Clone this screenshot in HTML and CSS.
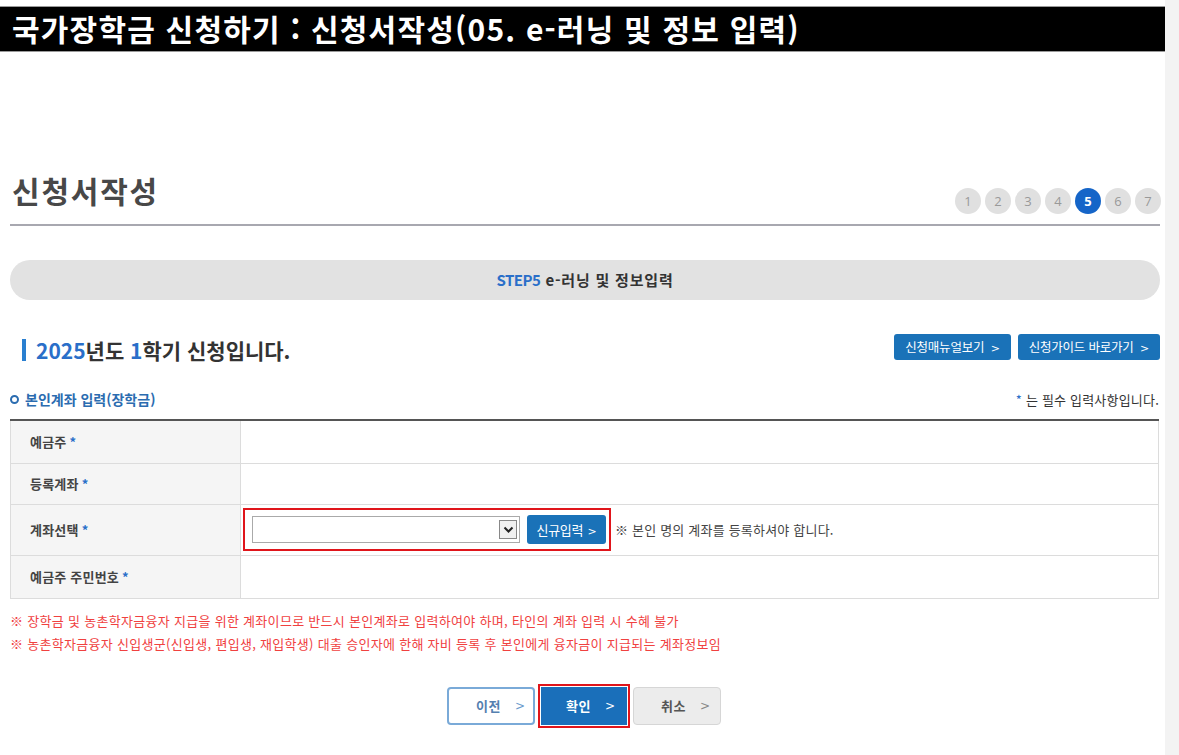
FILE: index.html
```html
<!DOCTYPE html>
<html lang="ko">
<head>
<meta charset="utf-8">
<title>국가장학금 신청하기</title>
<link rel="stylesheet" href="styles.css">
</head>
<body>
<div class="page">
  <div class="main">
    <div class="topbar">국가장학금 신청하기 : 신청서작성(05. e-러닝 및 정보 입력)</div>

    <div class="title-row">
      <h1 class="title">신청서작성</h1>
      <ol class="steps">
        <li>1</li><li>2</li><li>3</li><li>4</li><li class="on">5</li><li>6</li><li>7</li>
      </ol>
    </div>

    <div class="stepbar"><span class="blue">STEP5</span> e-러닝 및 정보입력</div>

    <div class="sem-row">
      <h2 class="sem"><span class="blue">2025</span>년도 <span class="blue">1</span>학기 신청입니다.</h2>
      <div class="guide-btns">
        <a class="gbtn">신청매뉴얼보기 <span class="chev">&gt;</span></a>
        <a class="gbtn">신청가이드 바로가기 <span class="chev">&gt;</span></a>
      </div>
    </div>

    <div class="sec-row">
      <h3 class="sec"><span class="ring"></span>본인계좌 입력(장학금)</h3>
      <p class="req"><span class="star">*</span> 는 필수 입력사항입니다.</p>
    </div>

    <table class="form">
      <tr class="r1"><th>예금주<span class="star">*</span></th><td></td></tr>
      <tr class="r2"><th>등록계좌<span class="star">*</span></th><td></td></tr>
      <tr class="r3"><th>계좌선택<span class="star">*</span></th>
        <td>
          <div class="acct">
            <div class="hl">
              <div class="sel"><span class="arrow"><svg width="11" height="8" viewBox="0 0 11 8"><path d="M1.5 1.5 L5.5 5.5 L9.5 1.5" fill="none" stroke="#222" stroke-width="2"/></svg></span></div>
              <a class="newbtn">신규입력 <span class="chev">&gt;</span></a>
            </div>
            <span class="note">※ 본인 명의 계좌를 등록하셔야 합니다.</span>
          </div>
        </td></tr>
      <tr class="r4"><th>예금주 주민번호<span class="star">*</span></th><td></td></tr>
    </table>

    <div class="warn">
      <p>※ 장학금 및 농촌학자금융자 지급을 위한 계좌이므로 반드시 본인계좌로 입력하여야 하며, 타인의 계좌 입력 시 수혜 불가</p>
      <p>※ 농촌학자금융자 신입생군(신입생, 편입생, 재입학생) 대출 승인자에 한해 자비 등록 후 본인에게 융자금이 지급되는 계좌정보임</p>
    </div>

    <div class="actions">
      <a class="abtn prev">이전<span class="chev">&gt;</span></a>
      <span class="hl2"><a class="abtn ok">확인<span class="chev">&gt;</span></a></span>
      <a class="abtn cancel">취소<span class="chev">&gt;</span></a>
    </div>
  </div>
  <div class="side"></div>
</div>
</body>
</html>
```

FILE: styles.css
```css
* { box-sizing: border-box; }
html, body { margin: 0; padding: 0; background: #fff; }
body {
  font-family: "Noto Sans CJK KR", "Noto Sans", sans-serif;
  color: #333;
  width: 1179px;
  height: 755px;
  overflow: hidden;
}
.page { display: flex; height: 755px; }
.main { width: 1165px; flex: none; }
.side { flex: 1; background: #f3f3f3; }

.topbar {
  margin-top: 6px;
  height: 46px;
  background: #000;
  border-top: 1px solid #9a9a9a;
  border-bottom: 1px solid #9a9a9a;
  color: #fff;
  font-weight: 700;
  font-size: 30px;
  line-height: 42px;
  padding-left: 12px;
  letter-spacing: 1.2px;
  white-space: nowrap;
}

.title-row {
  margin: 120px 5px 0 10px;
  display: flex;
  align-items: flex-end;
  justify-content: space-between;
  border-bottom: 2px solid #a8a8b0;
  padding-bottom: 10px;
}
.title {
  margin: 0 0 6px 2px;
  font-size: 30px;
  font-weight: 700;
  color: #484848;
  line-height: 36px;
  letter-spacing: 1.8px;
}
.steps {
  list-style: none;
  margin: 0 -1px 0 0;
  padding: 0;
  display: flex;
  gap: 4px;
}
.steps li {
  width: 26px; height: 26px;
  border-radius: 50%;
  background: #e0e0e0;
  color: #999;
  font-family: "Open Sans", "Noto Sans", sans-serif;
  font-size: 13px;
  line-height: 26px;
  text-align: center;
}
.steps li.on { background: #1565c8; color: #fff; font-weight: 700; }

.stepbar {
  margin: 34px 5px 0 10px;
  height: 40px;
  border-radius: 20px;
  background: #e2e2e2;
  text-align: center;
  font-size: 15px;
  font-weight: 700;
  line-height: 40px;
  color: #333;
  letter-spacing: 0.8px;
}
.stepbar .blue { letter-spacing: -0.5px; }
.blue { color: #2a6fc9; }

.sem-row {
  margin: 36px 5px 0 10px;
  display: flex;
  justify-content: space-between;
  align-items: center;
  height: 28px;
}
.sem {
  margin: 0 0 0 12px;
  padding-left: 10px;
  border-left: 4px solid #2a7fd0;
  font-size: 21px;
  font-weight: 700;
  color: #333;
  line-height: 22px;
  height: 22px;
  letter-spacing: 0;
}
.sem .blue { color: #2a6fc9; }
.guide-btns { display: flex; gap: 7px; margin-top: -6px; }
.gbtn {
  display: inline-block;
  height: 26px;
  padding: 0 11px;
  background: #1a72b8;
  border-radius: 3px;
  color: #fff;
  font-size: 12.5px;
  line-height: 26px;
  letter-spacing: -0.2px;
}
.chev { margin-left: 3px; font-family: "DejaVu Sans", sans-serif; font-size: 11px; }

.sec-row {
  margin: 26px 6px 0 10px;
  display: flex;
  justify-content: space-between;
  align-items: center;
  height: 18px;
}
.sec {
  margin: 0;
  font-size: 14px;
  font-weight: 700;
  color: #2b6cb0;
  display: flex;
  align-items: center;
  letter-spacing: 0;
}
.ring {
  width: 9px; height: 9px;
  border: 2px solid #2b6cb0;
  border-radius: 50%;
  margin-right: 6px;
}
.req { margin: 0; font-size: 13px; color: #333; letter-spacing: 0.2px; }
.star { color: #2a6fc9; margin-left: 3px; }
.req .star { margin: 0; }

.form {
  margin: 11px 6px 0 10px;
  width: 1149px;
  border-collapse: collapse;
  border-top: 2px solid #555;
}
.form th, .form td {
  border: 1px solid #dcdcdc;
  padding: 0;
}
.form th {
  width: 230px;
  background: #f5f5f5;
  text-align: left;
  padding-left: 19px;
  font-size: 13px;
  font-weight: 700;
  color: #444;
  letter-spacing: 0.2px;
}
.form th .star { font-weight: 700; }
.r1 { height: 43px; }
.r2 { height: 41px; }
.r3 { height: 51px; }
.r4 { height: 43px; }

.acct { display: flex; align-items: center; }
.hl {
  margin-left: 2px;
  width: 368px;
  height: 43px;
  border: 2px solid #e0151b;
  display: flex;
  align-items: center;
  padding-left: 7px;
  gap: 7px;
}
.sel {
  width: 268px;
  height: 27px;
  border: 1px solid #aaa;
  background: #fff;
  position: relative;
}
.arrow {
  position: absolute;
  right: 2px; top: 3px;
  width: 18px; height: 19px;
  border: 1px solid #888;
  background: #f0f0f0;
  display: flex; align-items: center; justify-content: center;
}
.newbtn {
  display: inline-block;
  width: 79px;
  height: 29px;
  background: #1a72b8;
  border-radius: 3px;
  color: #fff;
  font-size: 13px;
  line-height: 29px;
  text-align: center;
  letter-spacing: -0.3px;
}
.newbtn .chev { margin-left: 1px; }
.note { margin-left: 4px; font-size: 13px; color: #444; letter-spacing: 0.2px; }

.warn { margin: 10px 0 0 10px; }
.warn p {
  margin: 0;
  font-size: 13px;
  line-height: 23px;
  color: #f0413f;
  letter-spacing: 0.3px;
}

.actions {
  margin-top: 29px;
  display: flex;
  justify-content: center;
  align-items: center;
  gap: 4px;
  padding-right: 1px;
  margin-left: 4px;
}
.abtn {
  display: inline-flex;
  align-items: center;
  justify-content: flex-start;
  padding-left: 27px;
  width: 88px;
  height: 38px;
  border-radius: 4px;
  font-size: 13px;
  font-weight: 700;
  letter-spacing: 0.5px;
}
.abtn .chev { margin-left: 14px; font-size: 12px; font-weight: 400; }
.prev { border: 2px solid #7aaad8; background: #fff; color: #5580b0; }
.prev .chev { color: #6a9acc; }
.hl2 {
  display: inline-flex;
  border: 2px solid #e0151b;
  padding: 1px;
  margin: 0 -1px;
}
.ok { background: #1a6fba; color: #fff; width: 86px; height: 38px; border-radius: 0; padding-left: 25px; }
.cancel { background: #ececec; border: 1px solid #d6d6d6; color: #555; }
.cancel .chev { color: #888; }
```
